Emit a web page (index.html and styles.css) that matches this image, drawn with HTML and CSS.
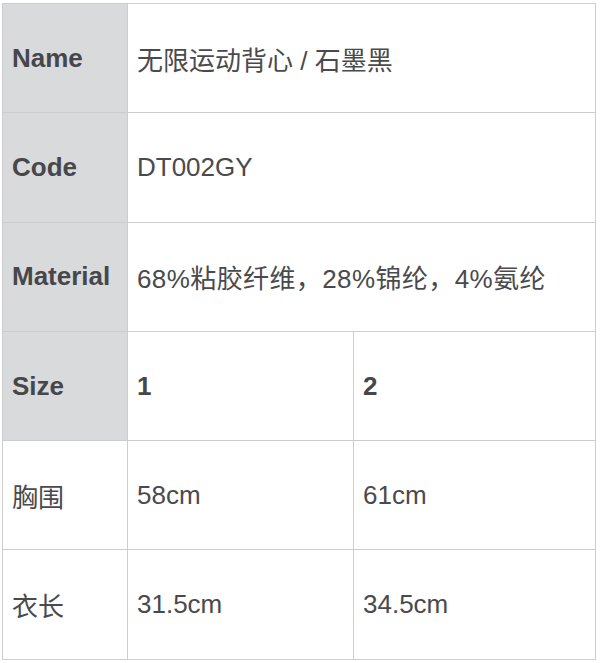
FILE: index.html
```html
<!DOCTYPE html>
<html lang="zh-CN">
<head>
  <meta charset="UTF-8" />
  <meta name="viewport" content="width=device-width, initial-scale=1.0"/>
  <title>无限运动背心 / 石墨黑</title>
  <link rel="stylesheet" href="styles.css">
</head>
<body>
  <table class="spec-table">
    <colgroup>
      <col class="col-label">
      <col class="col-a">
      <col class="col-b">
    </colgroup>
    <tr>
      <th>Name</th>
      <td colspan="2">无限运动背心 / 石墨黑</td>
    </tr>
    <tr>
      <th>Code</th>
      <td colspan="2">DT002GY</td>
    </tr>
    <tr>
      <th>Material</th>
      <td colspan="2" class="material">68%粘胶纤维，28%锦纶，4%氨纶</td>
    </tr>
    <tr>
      <th>Size</th>
      <td class="size">1</td>
      <td class="size">2</td>
    </tr>
    <tr>
      <td>胸围</td>
      <td>58cm</td>
      <td>61cm</td>
    </tr>
    <tr>
      <td>衣长</td>
      <td>31.5cm</td>
      <td>34.5cm</td>
    </tr>
  </table>
</body>
</html>
```

FILE: styles.css
```css
* {
  box-sizing: border-box;
}

body {
  margin: 0;
  padding: 3px 0 0 2px;
  background: #fff;
  font-family: 'Liberation Sans', Arial, 'Noto Sans CJK SC', sans-serif;
  color: #4a4a4c;
}

.spec-table {
  border-collapse: collapse;
  table-layout: fixed;
  width: 594px;
  font-size: 26px;
}

.col-label {
  width: 125px;
}

.col-a {
  width: 226px;
}

.spec-table th,
.spec-table td {
  height: 109.3px;
  border: 1px solid #cdcdcf;
  padding: 0 9px;
  text-align: left;
  vertical-align: middle;
  white-space: nowrap;
}

.spec-table th {
  background: #d9dadc;
  font-weight: bold;
  color: #46474b;
}

.spec-table td.material {
  letter-spacing: 0.4px;
}

.spec-table td.size {
  font-weight: bold;
  color: #46474b;
}
```
